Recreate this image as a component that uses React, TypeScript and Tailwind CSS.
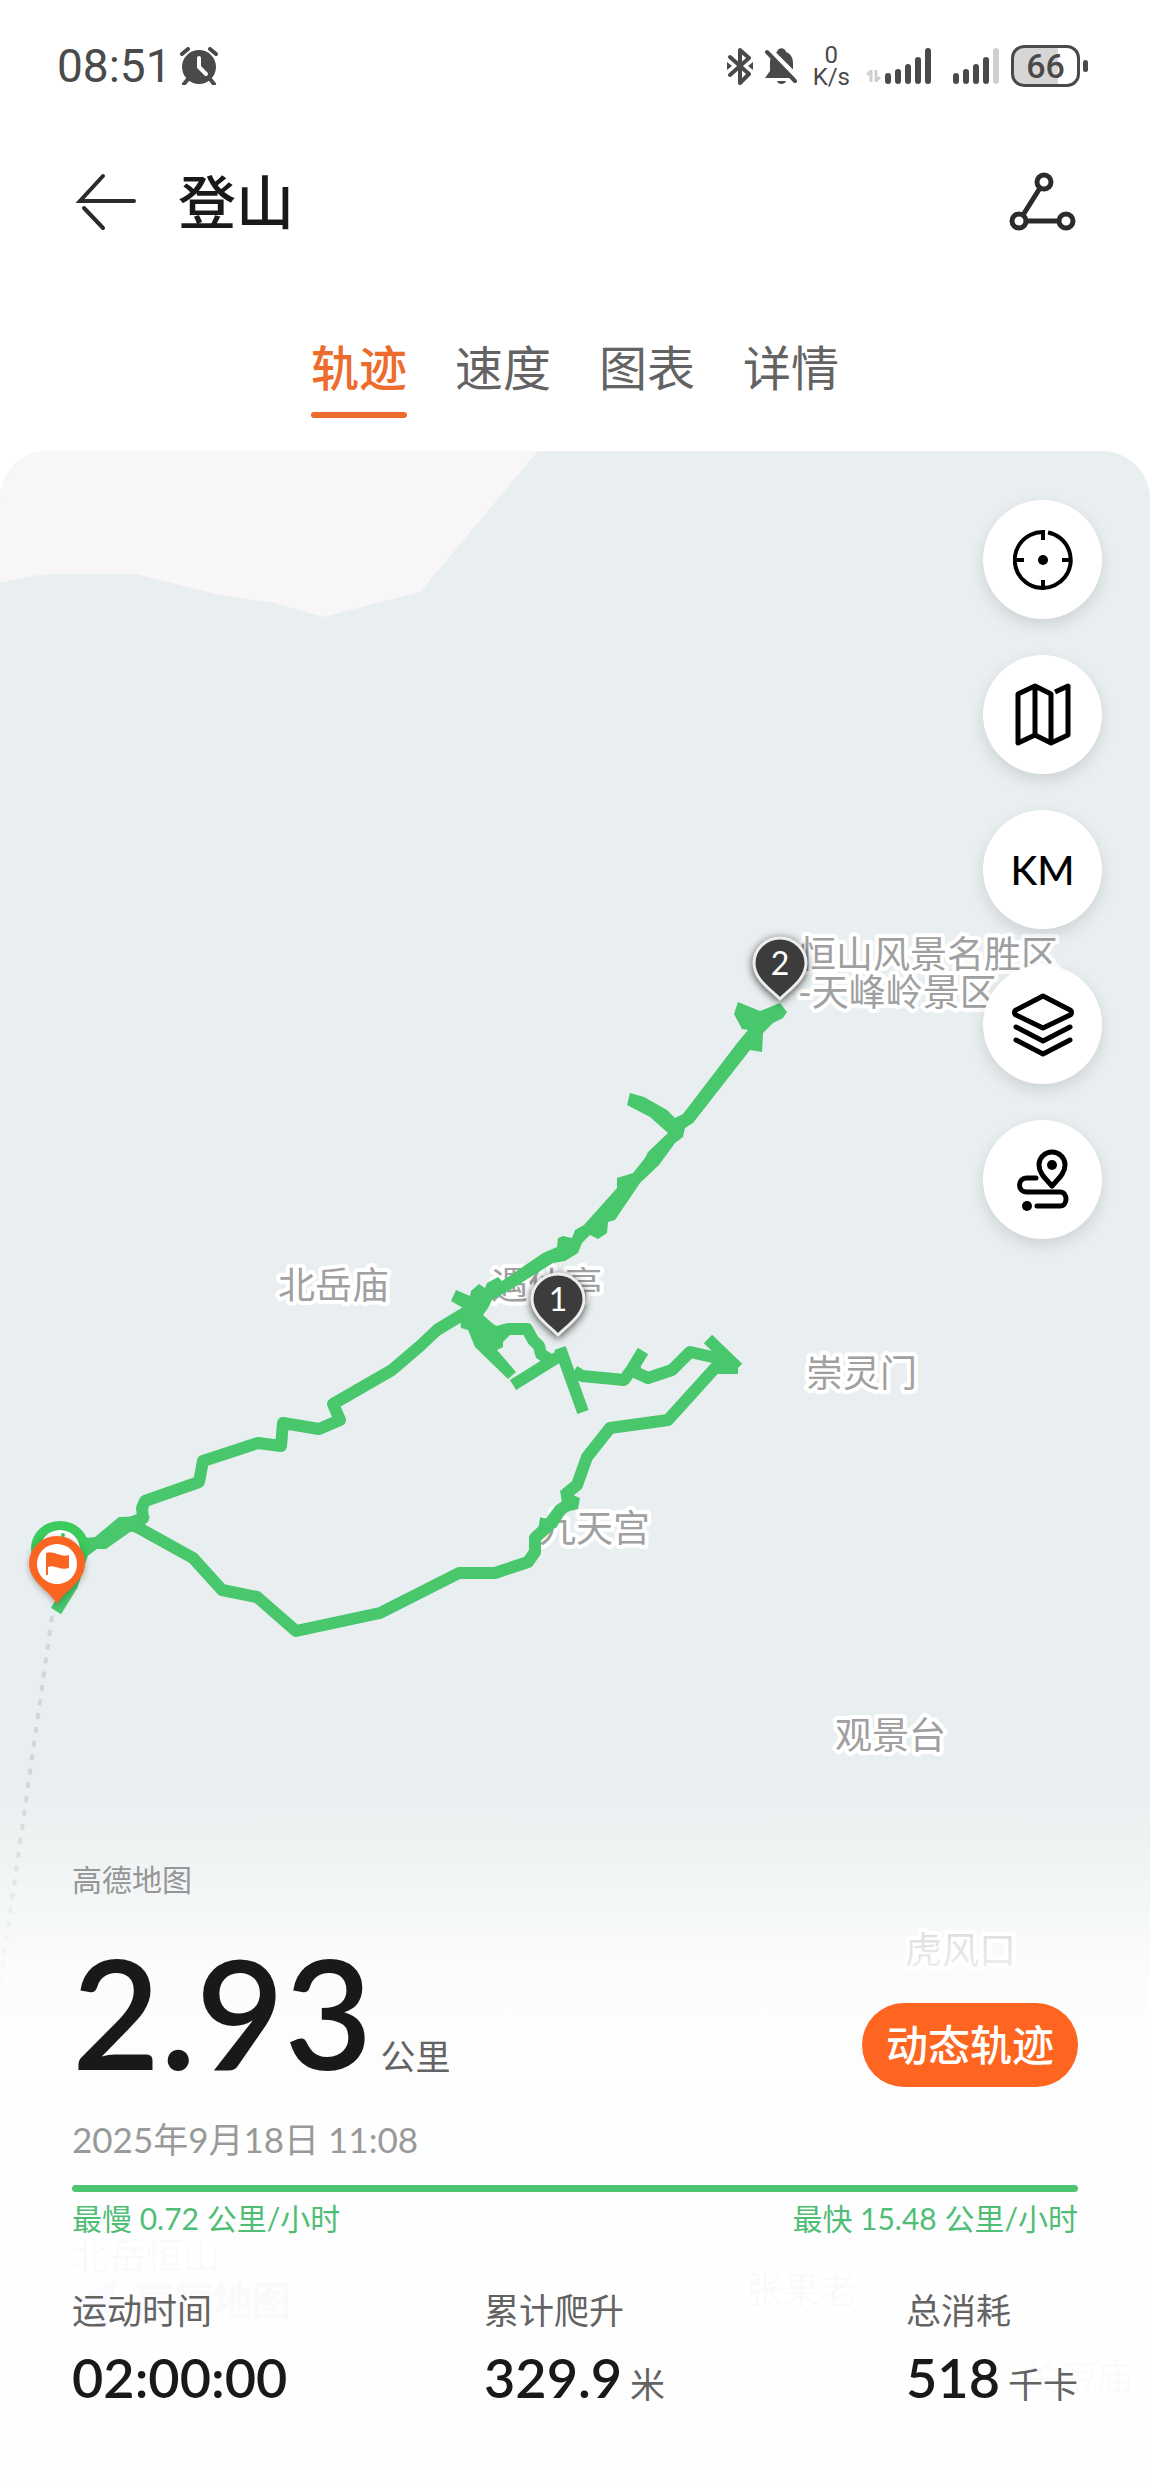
import { useState } from 'react'
import type { ReactNode } from 'react'

const TABS = ['轨迹', '速度', '图表', '详情']

interface Place {
  name: string
  x: number
  y: number
}

const PLACES: Place[] = [
  { name: '恒山风景名胜区', x: 799, y: 968 },
  { name: '-天峰岭景区', x: 798, y: 1006 },
  { name: '北岳庙', x: 278, y: 1299 },
  { name: '遇仙亭', x: 491, y: 1299 },
  { name: '崇灵门', x: 806, y: 1387 },
  { name: '九天宫', x: 539, y: 1542 },
  { name: '观景台', x: 835, y: 1749 },
  { name: '虎风口', x: 905, y: 1964 },
  { name: '北岳恒山', x: 72, y: 2270 },
  { name: '张果老', x: 746, y: 2304 },
  { name: '关帝庙', x: 1022, y: 2391 },
]

const TRACK_LINES = [
  // way up
  'M130 1523 143 1518 142 1508 145 1501 199 1482 203 1461 258 1443 281 1446 283 1423 319 1429 340 1420 333 1404 392 1370 420 1346 437 1330 460 1316 473 1308',
  // small ring
  'M490 1334 508 1329 527 1329 533 1340 539 1346 541 1354 552 1361',
  'M513 1385 558 1357',
  'M560 1348 583 1412',
  // eastern leg
  'M574 1371 582 1376 624 1380 632 1369 643 1351',
  'M633 1365 637 1373 648 1378 672 1370 690 1352 717 1358 737 1366',
  'M708 1339 738 1368',
  // way down
  'M738 1368 715 1368 668 1420 610 1428 587 1457 577 1485 567 1493 570 1503 560 1510 547 1527 535 1538 535 1552 528 1562 495 1573 459 1573 380 1613 296 1631 257 1597 222 1590 193 1558 137 1527 123 1523',
  'M84 1548 72 1585 56 1611',
]

const TRACK_AREAS = [
  'M456 1290 470 1296 471 1291 479 1284 485 1288 487 1283 498 1277 502 1281 543 1253 557 1247 558 1238 563 1236 572 1238 575 1230 584 1225 617 1188 617 1178 633 1173 645 1158 648 1152 668 1133 650 1117 627 1105 630 1093 644 1097 667 1110 675 1118 683 1114 738 1042 748 1030 742 1029 734 1014 738 1002 760 1011 780 1003 787 1012 783 1018 773 1023 763 1033 762 1052 750 1050 693 1123 685 1128 683 1137 675 1143 659 1165 640 1183 615 1220 608 1222 607 1233 598 1239 590 1235 582 1243 578 1253 565 1261 553 1263 510 1290 492 1300 488 1308 483 1315 492 1323 510 1335 503 1342 503 1347 497 1350 516 1372 508 1379 475 1347 468 1330 461 1328 460 1317 463 1308 451 1301Z',
  'M85 1538 95 1537 119 1517 150 1516 144 1527 130 1532 106 1549 97 1549 85 1558Z',
  'M540 1517 552 1520 562 1503 560 1490 580 1498 578 1509 566 1512 556 1528 538 1530Z',
]

const NumberPin = ({ x, y, label }: { x: number; y: number; label: string }) => (
  <g transform={`translate(${x} ${y})`}>
    <path
      d="M0 0C-10 -10 -26 -20 -26 -36A26 25 0 0 1 26 -36C26 -20 10 -10 0 0Z"
      className="fill-[#3c3c3c] stroke-[#ededed] drop-shadow-[0_2px_4px_rgba(0,0,0,0.7)]"
      strokeWidth={3}
      strokeLinejoin="round"
    />
    <text y={-24} textAnchor="middle" className="fill-white text-[32px] font-normal">
      {label}
    </text>
  </g>
)

const TrackMap = () => (
  <svg
    className="absolute inset-0 h-full w-full"
    viewBox="0 451 1150 2032"
    preserveAspectRatio="xMidYMin slice"
    role="img"
    aria-label="登山轨迹地图"
  >
    <path d="M0 451H538L420 592 323 617 275 603 215 594 135 574H60L38 575 0 583Z" className="fill-[#f8f6f7]" />

    <path d="M52 1616 0 1985" className="stroke-[#d3d6d8]" strokeWidth={4} strokeDasharray="6 8" />

    <g
      className="fill-[#a0a0a0] stroke-white text-[37px]"
      strokeWidth={8}
      strokeLinejoin="round"
      paintOrder="stroke"
    >
      {PLACES.map((place) => (
        <text key={place.name} x={place.x} y={place.y}>
          {place.name}
        </text>
      ))}
    </g>

    {/* map provider watermark */}
    <path d="M72 2300 116 2280 108 2332Z" className="fill-[#7fb2ff]" />
    <text x={135} y={2315} className="fill-[#909090] text-[39px] font-bold">
      高德地图
    </text>

    <g className="fill-none stroke-[#48c76c]" strokeWidth={12}>
      {TRACK_LINES.map((d) => (
        <path key={d} d={d} strokeLinejoin="round" />
      ))}
    </g>
    <g className="fill-[#48c76c]">
      {TRACK_AREAS.map((d) => (
        <path key={d} d={d} />
      ))}
    </g>

    <NumberPin x={780} y={999} label="2" />
    <NumberPin x={558} y={1335} label="1" />

    {/* start */}
    <g>
      <path d="M60 1589C50 1574 31 1564 31 1548A29 27 0 0 1 89 1548C89 1564 70 1574 60 1589Z" className="fill-[#3ccb5c]" />
      <circle cx={60} cy={1550} r={20} className="fill-white" />
      <circle cx={63} cy={1535} r={2} className="fill-[#3ccb5c]" />
    </g>
    {/* finish */}
    <g className="drop-shadow-[0_2px_3px_rgba(0,0,0,0.3)]">
      <path d="M57 1604C49 1590 29 1582 29 1563A28 27 0 0 1 85 1563C85 1582 65 1590 57 1604Z" className="fill-[#fb6522]" />
      <circle cx={57} cy={1564} r={20} className="fill-white" />
      <path d="M46 1553C54 1550 60 1558 69 1555V1568C60 1571 55 1564 48 1567V1575H46Z" className="fill-[#fb6522]" />
    </g>
  </svg>
)

const SignalBars = ({ level }: { level: number }) => (
  <svg width="46" height="36" viewBox="0 0 46 36" aria-hidden="true">
    {[11, 15, 20, 27, 36].map((h, i) => (
      <rect
        key={h}
        x={i * 10}
        y={36 - h}
        width={6}
        height={h}
        rx={3}
        className={i < level ? 'fill-[#4a4a4a]' : 'fill-[#cfcfcf]'}
      />
    ))}
  </svg>
)

const StatusBar = () => (
  <div className="flex h-[132px] items-center justify-between pr-[62px] pl-[57px] font-['Roboto','Noto_Sans_CJK_SC',sans-serif] text-[#4a4a4a]">
    <div className="flex items-center gap-2">
      <span className="text-[46px] leading-none">08:51</span>
      <svg width="38" height="38" viewBox="0 0 38 38" fill="none" stroke="currentColor" aria-hidden="true">
        <circle cx="19" cy="20" r="17" fill="currentColor" stroke="none" />
        <path d="M2 7 8 2M36 7 30 2M8 32 4 37M30 32 34 37" strokeWidth="4" strokeLinecap="round" />
        <path d="M19 11V20L26 27" stroke="white" strokeWidth="4" strokeLinecap="round" strokeLinejoin="round" />
      </svg>
    </div>

    <div className="flex items-center">
      <svg width="26" height="38" viewBox="0 0 26 38" fill="none" stroke="currentColor" aria-hidden="true">
        <path
          d="M3 10 22 27 13 36V3L22 11 3 28"
          strokeWidth="4"
          strokeLinecap="round"
          strokeLinejoin="round"
        />
        <path d="M0 15 5 19 0 23ZM26 15 21 19 26 23Z" fill="currentColor" stroke="none" />
      </svg>
      <svg className="ml-3" width="32" height="38" viewBox="0 0 32 38" aria-hidden="true">
        <path
          d="M0 31 5 24V16C5 10 8 6 12 5C13 0 20 0 21 5C26 7 28 11 28 16V24L32 31ZM12 34H21C20 38 13 38 12 34Z"
          fill="currentColor"
        />
        <path d="M4 2 34 32" stroke="white" strokeWidth="5" />
        <path d="M2 5 30 34" stroke="currentColor" strokeWidth="4" strokeLinecap="round" />
      </svg>
      <div className="ml-4 flex flex-col items-center text-2xl leading-[22px]">
        <span>0</span>
        <span>K/s</span>
      </div>
      <svg className="mt-5 ml-4" width="15" height="12" viewBox="0 0 15 12" fill="none" aria-hidden="true">
        <path d="M1 5 5 1V12M10 0V11L14 7" className="stroke-[#cfcfcf]" strokeWidth="3" />
      </svg>
      <div className="ml-1">
        <SignalBars level={5} />
      </div>
      <div className="ml-[22px]">
        <SignalBars level={4} />
      </div>
      <div className="ml-3 flex items-center gap-[3px]">
        <div className="flex h-[42px] w-[69px] items-center justify-center rounded-[13px] border-3 border-[#4a4a4a] bg-linear-to-r from-[#d6d6d6] from-70% to-white to-70% text-[34px] leading-none font-medium">
          66
        </div>
        <div className="h-3 w-[5px] rounded-full bg-[#4a4a4a]" />
      </div>
    </div>
  </div>
)

const CrosshairIcon = () => (
  <svg width="60" height="60" viewBox="0 0 60 60" fill="none" stroke="currentColor" strokeWidth="4" aria-hidden="true">
    <path d="M35 2.5A28 28 0 1 1 30 2V10M30 58V50M2 30H11M58 30H49" />
    <circle cx="30" cy="30" r="5" fill="currentColor" stroke="none" />
  </svg>
)

const MapIcon = () => (
  <svg
    width="60"
    height="64"
    viewBox="0 0 60 64"
    fill="none"
    stroke="currentColor"
    strokeWidth="5"
    strokeLinejoin="round"
    aria-hidden="true"
  >
    <path d="M42 9 55 3V52L38 60 22 52 5 60V11L22 3V52M22 3 38 11V60" />
  </svg>
)

const LayersIcon = () => (
  <svg
    width="62"
    height="64"
    viewBox="0 0 62 64"
    fill="none"
    stroke="currentColor"
    strokeWidth="5"
    strokeLinecap="round"
    strokeLinejoin="round"
    aria-hidden="true"
  >
    <path d="M31 3 58 17C60 18 60 21 58 22L31 35 4 22C2 21 2 18 4 17ZM4 34 31 48 58 34M4 47 31 61 58 47" />
  </svg>
)

const RouteIcon = () => (
  <svg
    width="54"
    height="62"
    viewBox="0 0 54 62"
    fill="none"
    stroke="currentColor"
    strokeWidth="5"
    strokeLinecap="round"
    strokeLinejoin="round"
    aria-hidden="true"
  >
    <path d="M36 37C29 29 23 24 23 16A13 13 0 0 1 49 16C49 24 43 29 36 37Z" />
    <circle cx="36" cy="16" r="5" fill="currentColor" stroke="none" />
    <path d="M20 29H11C1 29 1 43 11 43H44C52 43 52 57 44 57H21" />
    <circle cx="11" cy="57" r="5" fill="currentColor" stroke="none" />
  </svg>
)

const MapButton = ({ label, children }: { label: string; children: ReactNode }) => (
  <button
    aria-label={label}
    className="flex h-[119px] w-[119px] items-center justify-center rounded-full bg-white text-black shadow-[0_6px_16px_rgba(0,0,0,0.12)]"
  >
    {children}
  </button>
)

interface StatProps {
  label: string
  value: string
  unit?: string
}

const Stat = ({ label, value, unit }: StatProps) => (
  <div className="whitespace-nowrap">
    <div className="text-[35px] leading-[48px] text-[#636363]">{label}</div>
    <div className="mt-3 flex items-baseline gap-2 leading-[64px]">
      <span className="text-[54px] font-semibold text-[#191919]">{value}</span>
      {unit && <span className="text-[35px] text-[#636363]">{unit}</span>}
    </div>
  </div>
)

const App = () => {
  const [activeTab, setActiveTab] = useState(TABS[0])

  return (
    <div className="flex min-h-screen flex-col bg-white font-['Lato','Noto_Sans_CJK_SC',sans-serif]">
      <StatusBar />

      <header className="flex h-[140px] items-center px-[72px]">
        <button aria-label="返回" className="text-[#2b2b2b]">
          <svg
            width="68"
            height="60"
            viewBox="0 0 68 60"
            fill="none"
            stroke="currentColor"
            strokeWidth="4"
            strokeLinecap="round"
            aria-hidden="true"
          >
            <path d="M31 4 8 29H62M12 36 31 56" />
          </svg>
        </button>
        <h1 className="ml-[38px] flex-1 text-[58px] leading-[72px] font-medium text-[#191919]">登山</h1>
        <button aria-label="分享轨迹" className="text-[#2b2b2b]">
          <svg width="70" height="60" viewBox="0 0 70 60" fill="none" stroke="currentColor" strokeWidth="5" aria-hidden="true">
            <circle cx="36" cy="10" r="7" />
            <circle cx="11" cy="49" r="7" />
            <circle cx="58" cy="49" r="7" />
            <path d="M32 16 15 43M18 49H51" />
          </svg>
        </button>
      </header>

      <nav className="flex h-[179px] justify-center gap-12 pt-[64px]">
        {TABS.map((tab) => (
          <button
            key={tab}
            onClick={() => setActiveTab(tab)}
            className={`flex h-[82px] flex-col justify-between text-5xl leading-[64px] ${activeTab === tab ? 'font-medium text-[#ec6b2d]' : 'text-[#636363]'}`}
          >
            {tab}
            <span className={`h-[6px] w-full rounded-full ${activeTab === tab ? 'bg-[#ec6b2d]' : 'bg-transparent'}`} />
          </button>
        ))}
      </nav>

      <main className="relative flex flex-1 flex-col overflow-hidden rounded-t-[48px] bg-[#e9eff0]">
        <TrackMap />

        <div className="relative flex flex-col gap-9 self-end pt-[49px] pr-12">
          <MapButton label="定位">
            <CrosshairIcon />
          </MapButton>
          <MapButton label="地图类型">
            <MapIcon />
          </MapButton>
          <MapButton label="公里标记">
            <span className="text-[40px] leading-none font-medium">KM</span>
          </MapButton>
          <MapButton label="图层">
            <LayersIcon />
          </MapButton>
          <MapButton label="路线">
            <RouteIcon />
          </MapButton>
        </div>

        <section className="relative mt-auto bg-[linear-gradient(to_bottom,rgba(255,255,255,0)_0,rgba(255,255,255,0.2)_60px,rgba(255,255,255,0.45)_110px,rgba(255,255,255,0.7)_160px,rgba(255,255,255,0.86)_200px,rgba(255,255,255,0.95)_400px,rgba(255,255,255,0.96)_100%)] px-[72px] pt-[76px] pb-[67px]">
          <div className="text-3xl leading-[44px] text-[#969696]">高德地图</div>

          <div className="mt-[34px] flex items-end justify-between">
            <div className="flex items-baseline gap-2 leading-[152px]">
              <span className="text-[152px] font-semibold text-[#191919]">2.93</span>
              <span className="text-[35px] leading-[40px] text-[#636363]">公里</span>
            </div>
            <button className="rounded-full bg-[#fd6520] px-6 text-[42px] leading-[84px] font-medium text-white">
              动态轨迹
            </button>
          </div>

          <div className="mt-7 text-[35px] leading-[48px] text-[#999999]">2025年9月18日 11:08</div>

          <div className="mt-[22px] h-[7px] rounded-full bg-[#4dc673]" />
          <div className="mt-1 flex justify-between text-3xl leading-[44px] text-[#50bd76]">
            <span>最慢 0.72 公里/小时</span>
            <span>最快 15.48 公里/小时</span>
          </div>

          <div className="mt-[46px] grid grid-cols-[83fr_85fr_33fr]">
            <Stat label="运动时间" value="02:00:00" />
            <Stat label="累计爬升" value="329.9" unit="米" />
            <Stat label="总消耗" value="518" unit="千卡" />
          </div>
        </section>
      </main>
    </div>
  )
}

export default App
